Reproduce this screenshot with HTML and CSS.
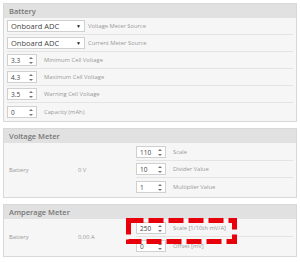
FILE: index.html
```html
<!DOCTYPE html>
<html lang="en">
<head>
    <meta charset="UTF-8">
    <meta name="viewport" content="width=device-width, initial-scale=1.0">
    <title>Power settings</title>
    <link rel="stylesheet" href="styles.css">
</head>
<body>
    <div class="page">
        <div class="panel">
            <div class="panel-head">Battery</div>
            <div class="panel-body list">
                <div class="row">
                    <div class="select">Onboard ADC<span class="caret">▼</span></div>
                    <span class="label tight">Voltage Meter Source</span>
                </div>
                <div class="row">
                    <div class="select">Onboard ADC<span class="caret">▼</span></div>
                    <span class="label tight">Current Meter Source</span>
                </div>
                <div class="row">
                    <div class="num">3.3<span class="spin"></span></div>
                    <span class="label">Minimum Cell Voltage</span>
                </div>
                <div class="row">
                    <div class="num">4.3<span class="spin"></span></div>
                    <span class="label">Maximum Cell Voltage</span>
                </div>
                <div class="row">
                    <div class="num">3.5<span class="spin"></span></div>
                    <span class="label">Warning Cell Voltage</span>
                </div>
                <div class="row">
                    <div class="num">0<span class="spin"></span></div>
                    <span class="label">Capacity (mAh)</span>
                </div>
            </div>
        </div>

        <div class="panel">
            <div class="panel-head">Voltage Meter</div>
            <div class="panel-body meter">
                <span class="cell">Battery</span>
                <span class="cell">0 V</span>
                <div class="fields">
                    <div class="row">
                        <div class="num">110<span class="spin"></span></div>
                        <span class="label">Scale</span>
                    </div>
                    <div class="row">
                        <div class="num">10<span class="spin"></span></div>
                        <span class="label">Divider Value</span>
                    </div>
                    <div class="row">
                        <div class="num">1<span class="spin"></span></div>
                        <span class="label">Multiplier Value</span>
                    </div>
                </div>
            </div>
        </div>

        <div class="panel">
            <div class="panel-head">Amperage Meter</div>
            <div class="panel-body meter">
                <span class="cell">Battery</span>
                <span class="cell">0.00 A</span>
                <div class="fields">
                    <div class="row">
                        <div class="num">250<span class="spin"></span></div>
                        <span class="label">Scale [1/10th mV/A]</span>
                    </div>
                    <div class="row">
                        <div class="num">0<span class="spin"></span></div>
                        <span class="label">Offset [mV]</span>
                    </div>
                </div>
            </div>
        </div>
    </div>

    <!-- highlight drawn over the scale field -->
    <svg class="highlight" width="116" height="32" viewBox="0 0 116 32">
        <rect x="2.5" y="2.5" width="106" height="21" fill="none" stroke="#e8000b" stroke-width="5" stroke-dasharray="15 5"/>
    </svg>
</body>
</html>
```

FILE: styles.css
```css
* {
    margin: 0;
    padding: 0;
    box-sizing: border-box;
}

body {
    font-family: 'Open Sans', 'Liberation Sans', sans-serif;
    background: white;
    position: relative;
    overflow: hidden;
    height: 262px;
}

.page {
    padding: 3px;
}

.panel {
    border: 1px solid #d8d8d8;
    background: #f6f6f6;
    margin-bottom: 6px;
}

.panel-head {
    background: #e1e1e1;
    height: 14px;
    line-height: 14px;
    padding-left: 5px;
    font-size: 7.5px;
    font-weight: 600;
    color: #777;
}

.list {
    padding: 0 3px 1px 3px;
}

.row {
    display: flex;
    align-items: center;
    height: 17px;
    border-bottom: 1px solid #e4e4e4;
}

.row:last-child {
    border-bottom: none;
}

.select {
    position: relative;
    width: 78px;
    height: 12px;
    line-height: 11px;
    background: white;
    border: 1px solid #d0d0d0;
    padding-left: 3px;
    font-size: 7.5px;
    color: #444;
}

.caret {
    position: absolute;
    right: 3px;
    top: 0;
    font-size: 5px;
    color: #222;
}

.num {
    position: relative;
    width: 30px;
    height: 12px;
    line-height: 11px;
    background: white;
    border: 1px solid #d0d0d0;
    padding-left: 3px;
    font-size: 6.5px;
    color: #444;
}

.spin {
    position: absolute;
    right: 3px;
    top: 2px;
    width: 4px;
    height: 7px;
}

.spin::before,
.spin::after {
    content: '';
    position: absolute;
    left: 0;
    border-left: 2px solid transparent;
    border-right: 2px solid transparent;
}

.spin::before {
    top: 0;
    border-bottom: 2.5px solid #777;
}

.spin::after {
    bottom: 0;
    border-top: 2.5px solid #777;
}

.label {
    margin-left: 7px;
    font-size: 5.8px;
    color: #999;
    white-space: nowrap;
}

.label.tight {
    margin-left: 3px;
}

.meter {
    display: grid;
    grid-template-columns: 69px 58px 1fr;
    align-items: center;
    padding: 1px 3px 2px 5px;
}

.cell {
    font-size: 5.8px;
    color: #999;
}

.highlight {
    position: absolute;
    left: 126px;
    top: 218px;
}
```
